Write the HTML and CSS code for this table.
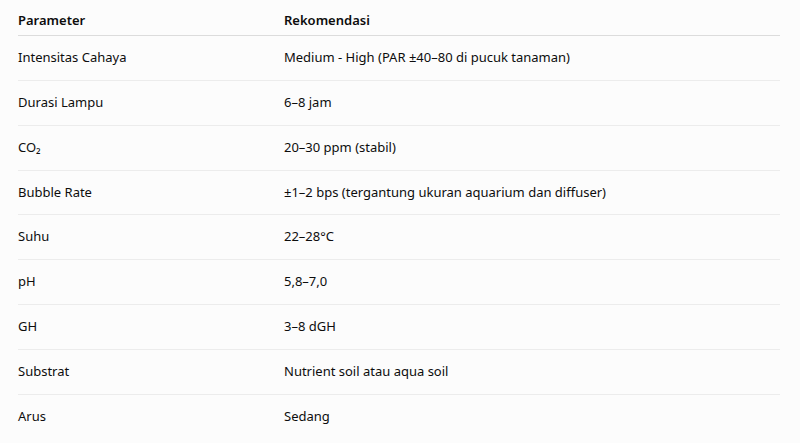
FILE: index.html
```html
<!DOCTYPE html>
<html lang="id">
<head>
<meta charset="utf-8">
<link rel="stylesheet" href="styles.css">
</head>
<body>
<div class="wrap">
<table class="params">
<thead>
<tr><th class="c1">Parameter</th><th>Rekomendasi</th></tr>
</thead>
<tbody>
<tr><td>Intensitas Cahaya</td><td>Medium - High (PAR ±40–80 di pucuk tanaman)</td></tr>
<tr><td>Durasi Lampu</td><td>6–8 jam</td></tr>
<tr><td>CO₂</td><td>20–30 ppm (stabil)</td></tr>
<tr><td>Bubble Rate</td><td>±1–2 bps (tergantung ukuran aquarium dan diffuser)</td></tr>
<tr><td>Suhu</td><td>22–28°C</td></tr>
<tr><td>pH</td><td>5,8–7,0</td></tr>
<tr><td>GH</td><td>3–8 dGH</td></tr>
<tr><td>Substrat</td><td>Nutrient soil atau aqua soil</td></tr>
<tr><td>Arus</td><td>Sedang</td></tr>
</tbody>
</table>
</div>
</body>
</html>
```
FILE: styles.css
```css
html, body {
  margin: 0;
  padding: 0;
  background: #fcfcfc;
}
.wrap {
  padding: 0 20px 0 18px;
}
.params {
  width: 762px;
  border-collapse: collapse;
  table-layout: fixed;
  font-family: "Noto Sans", "Open Sans", sans-serif;
  font-size: 13px;
  color: #0d0d0d;
}
.params th {
  text-align: left;
  font-weight: 600;
  padding: 11px 0 6px 0;
  line-height: 18px;
  border-bottom: 1px solid #dcdcdc;
}
.params th.c1 {
  width: 266px;
}
.params td {
  padding: 13px 0 13px 0;
  line-height: 17.86px;
  border-bottom: 1px solid #ececec;
}
.params tbody tr:last-child td {
  border-bottom: none;
}
```
